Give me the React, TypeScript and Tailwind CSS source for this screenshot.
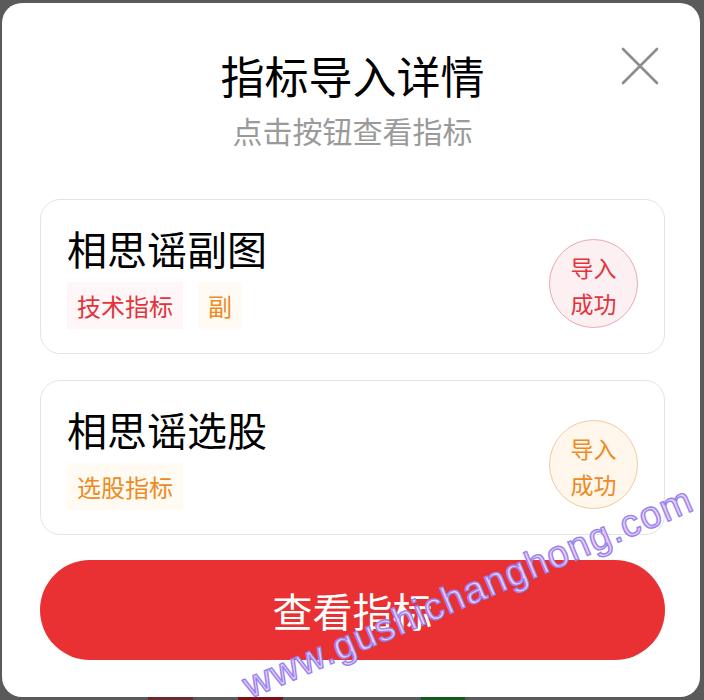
import React from 'react';

const cards = [
  {
    title: '相思谣副图',
    tags: [
      { label: '技术指标', className: 'bg-[#fff6f7] text-[#e3343c]' },
      { label: '副', className: 'bg-[#fffaf3] text-[#ee8a1e]' },
    ],
    badge: 'border-[#e8a9b2] bg-[#fdf0f2] text-[#e3343c]',
  },
  {
    title: '相思谣选股',
    tags: [{ label: '选股指标', className: 'bg-[#fffaf2] text-[#ee8a1e]' }],
    badge: 'border-[#f0cb9f] bg-[#fff6ec] text-[#ee8a1e]',
  },
];

function CloseIcon() {
  return (
    <svg width="38" height="38" viewBox="0 0 38 38" fill="none">
      <path d="M2 2 L36 36 M36 2 L2 36" stroke="#8c8c8c" strokeWidth="2.6" strokeLinecap="round" />
    </svg>
  );
}

const App = () => {
  return (
    <div className="relative h-[700px] w-[704px] overflow-hidden bg-[#5a5a5a] font-['Noto_Sans_CJK_SC',sans-serif]">
      {/* Dialog */}
      <div className="relative ml-[2px] mt-[3px] flex h-[694px] w-[698px] flex-col rounded-[20px] bg-white pl-[38px] pr-[35px] pt-[50px]">
        <button className="absolute left-[619px] top-[44px]">
          <CloseIcon />
        </button>

        <h1 className="text-center text-[44px] leading-[44px] text-black">指标导入详情</h1>
        <p className="mt-[18px] text-center text-[30px] leading-[30px] text-[#9a9a9a]">点击按钮查看指标</p>

        <div className="mt-[54px] flex flex-col gap-[26px]">
          {cards.map((card, i) => (
            <div
              key={i}
              className="flex items-center justify-between rounded-[20px] border border-[#e4e4e4] pb-[24px] pl-[26px] pr-[26px] pt-[28px]"
            >
              <div className="flex flex-col">
                <div className="text-[40px] leading-[40px] text-black">{card.title}</div>
                <div className="mt-[14px] flex gap-[15px]">
                  {card.tags.map((tag) => (
                    <span
                      key={tag.label}
                      className={`flex h-[47px] items-center px-[10px] text-[24px] leading-[24px] ${tag.className}`}
                    >
                      {tag.label}
                    </span>
                  ))}
                </div>
              </div>
              <div
                className={`mt-[10px] flex h-[89px] w-[89px] flex-col items-center justify-center rounded-full border pt-[2px] text-[23px] leading-[36px] ${card.badge}`}
              >
                <span>导入</span>
                <span>成功</span>
              </div>
            </div>
          ))}
        </div>

        <button className="mt-[25px] flex h-[100px] w-full items-center justify-center rounded-full bg-[#e93033] text-[40px] leading-[40px] text-white">
          查看指标
        </button>
      </div>

      {/* page content peeking out below the dialog */}
      <div className="flex h-[3px]">
        <div className="ml-[148px] w-[45px] bg-[#6b2b2d]" />
        <div className="ml-[45px] w-[45px] bg-[#7c1016]" />
        <div className="ml-[138px] w-[44px] bg-[#145a1c]" />
      </div>

      {/* watermark */}
      <div className="pointer-events-none absolute left-[468px] top-[592px] -translate-x-1/2 -translate-y-1/2 rotate-[-23deg] whitespace-nowrap font-['Liberation_Sans',sans-serif] text-[38px] leading-[38px] tracking-[1.5px] text-[#f7c8f1] [-webkit-text-stroke:1.4px_#9286f2]">
        www.gushichanghong.com
      </div>
    </div>
  );
};

export default App;
